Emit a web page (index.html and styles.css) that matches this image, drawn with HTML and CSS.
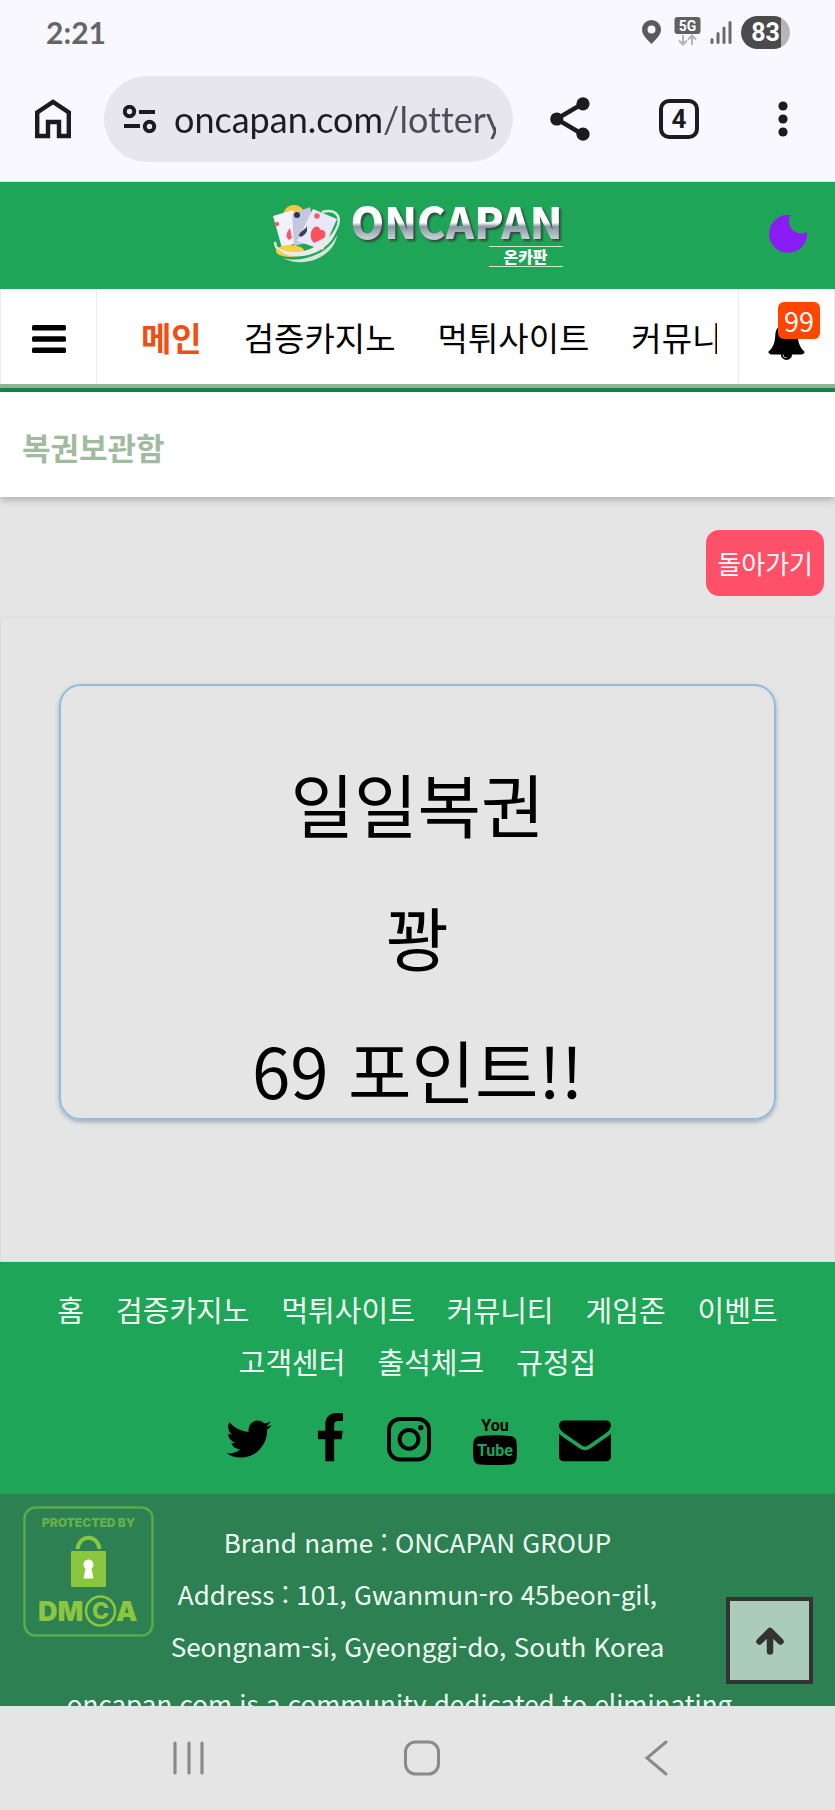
FILE: index.html
```html
<!DOCTYPE html>
<html lang="ko">
<head>
<meta charset="utf-8">
<meta name="viewport" content="width=device-width, initial-scale=1">
<title>복권보관함 - ONCAPAN</title>
<link rel="stylesheet" href="styles.css">
</head>
<body>
<div class="phone">
  <div class="chrome">
    <div class="status">
      <span class="clock">2:21</span>
      <div class="status-icons">
        <svg class="pin" viewBox="0 0 19 24" width="19" height="24"><path fill="#5b5b5d" fill-rule="evenodd" d="M9.500 0A9.500 9.500 0 0 0 0 9.500C0 15 5 19 9.500 24 14 19 19 15 19 9.500A9.500 9.500 0 0 0 9.500 0zm0 5.500a4 4 0 1 1 0 8 4 4 0 0 1 0-8z"/></svg>
        <svg class="net" viewBox="0 0 27 30" width="27" height="30"><rect width="26" height="17" x=".5" rx="3" fill="#616163"/><text x="13.500" y="13.500" text-anchor="middle" class="net-label">5G</text><path d="M9 18v9M5 23.500l4 4 4-4M18 28v-9M14 22.500l4-4 4 4" fill="none" stroke="#b3b3b8" stroke-width="2"/></svg>
        <svg class="signal" viewBox="0 0 22 23" width="22" height="23"><path d="M2 18.500v3M8 12.500v9M14 7v14.500M20 1.500v20" stroke="#6a6a6c" stroke-width="3" stroke-linecap="round"/></svg>
        <span class="battery">83</span>
      </div>
    </div>
    <div class="toolbar">
      <button class="icon-btn" type="button" aria-label="Home">
        <svg viewBox="0 0 36 40" width="36" height="40"><path d="M2.200 37V13.500L18 3l15.800 10.500V37H24V23H13v14z" fill="none" stroke="#1b1b21" stroke-width="4.400"/></svg>
      </button>
      <div class="omnibox">
        <svg viewBox="0 0 34 28" width="34" height="28" fill="none" stroke="#1b1b21" stroke-width="4"><circle cx="6.500" cy="6.500" r="4.700"/><circle cx="26.500" cy="21.500" r="4.700"/><path d="M16 7h16M1 21h16"/></svg>
        <input class="url" type="text" aria-label="Address" value="oncapan.com/lottery">
      </div>
      <div class="actions">
        <button class="icon-btn" type="button" aria-label="Share">
          <svg viewBox="0 0 40 44" width="40" height="44"><path d="M33 6.500L6.500 22 33 37.500" fill="none" stroke="#1b1b21" stroke-width="4.400"/><g fill="#1b1b21"><circle cx="33" cy="6.800" r="6.600"/><circle cx="6.800" cy="22" r="6.600"/><circle cx="33" cy="37.200" r="6.600"/></g></svg>
        </button>
        <button class="icon-btn tabs" type="button" aria-label="Tabs">4</button>
        <button class="icon-btn more" type="button" aria-label="Menu">
          <svg viewBox="0 0 10 36" width="10" height="36" fill="#1b1b21"><circle cx="5" cy="5" r="4.600"/><circle cx="5" cy="18" r="4.600"/><circle cx="5" cy="31" r="4.600"/></svg>
        </button>
      </div>
    </div>
  </div>

  <div class="site">
    <header class="masthead">
      <a class="logo" href="#" aria-label="ONCAPAN 온카판">
        <svg class="emblem" viewBox="0 0 68 62" width="68" height="62">
          <path d="M50 8c12-3 19 2 16 13C62 34 43 48 24 50 12 51 3 47 3 38" fill="none" stroke="#d7eadc" stroke-width="2.500"/>
          <circle cx="22" cy="12" r="11" fill="#f6c945"/>
          <path d="M1 12l20-6 9 31-20 7z" fill="#f3f2fb"/>
          <path d="M20 10l18-7 8 33-24 6z" fill="#c3c8dd"/>
          <path d="M41 5l24 10-14 31-26-9z" fill="#e7e8f8"/>
          <circle cx="25" cy="11" r="3" fill="#2d3358"/>
          <path d="M35 22c-1 4-8 5-8 10 2 2 6-1 8-5z" fill="#3a3f60"/>
          <path d="M18 24c-4 5-5 9-1 12l3-2z" fill="#f35b68"/>
          <circle cx="5" cy="20" r="2.200" fill="#f35b68"/><circle cx="45" cy="12" r="2.800" fill="#f35b68"/>
          <path d="M40 26c3-5 8-4 8 0 5-1 7 4 4 8l-10 5c-4-4-4-9-2-13z" fill="#f8525e"/>
          <ellipse cx="18" cy="47" rx="14" ry="6" fill="#f9cf45"/>
          <path d="M3 36c0 19 48 16 62-12-4 24-43 38-59 21" fill="#e7eee4"/>
          <path d="M10 54c22 6 48-6 55-23-2 19-29 35-55 23z" fill="#d5e6d6"/>
        </svg>
        <span class="wordmark">
          <span class="word">ONCAPAN</span>
          <span class="sub">온카판</span>
        </span>
      </a>
      <button class="theme" type="button" aria-label="Dark mode">
        <svg viewBox="0 0 38 38" width="38" height="38"><path fill="#8a1cf6" d="M21.500 0A19 19 0 1 0 38 17 12.300 12.300 0 0 1 21.500 0z"/></svg>
      </button>
    </header>

    <nav class="mainnav">
      <button class="cell burger" type="button" aria-label="전체메뉴">
        <svg viewBox="0 0 34 28" width="34" height="28"><rect width="34" height="5.600" rx="1.500"/><rect y="11.200" width="34" height="5.600" rx="1.500"/><rect y="22.400" width="34" height="5.600" rx="1.500"/></svg>
      </button>
      <div class="menu">
        <a class="active" href="#">메인</a>
        <a href="#">검증카지노</a>
        <a href="#">먹튀사이트</a>
        <a href="#">커뮤니티</a>
      </div>
      <button class="cell bell" type="button" aria-label="알림">
        <svg viewBox="0 0 1792 1792" width="39" height="39"><path d="M912 1696q0-16-16-16-59 0-101.500-42.500t-42.500-101.500q0-16-16-16t-16 16q0 73 51.500 124.500t124.500 51.500q16 0 16-16zm816-288q0 52-38 90t-90 38h-448q0 106-75 181t-181 75-181-75-75-181h-448q-52 0-90-38t-38-90q50-42 91-88t85-119.500 74.500-158.500 50-206 19.500-260q0-152 117-282.500t307-158.500q-8-19-8-39 0-40 28-68t68-28 68 28 28 68q0 20-8 39 190 28 307 158.500t117 282.500q0 139 19.500 260t50 206 74.500 158.500 85 119.500 91 88z"/></svg>
        <span class="count">99</span>
      </button>
    </nav>

    <h1 class="page-title">복권보관함</h1>

    <main class="content">
      <div class="back-row"><a class="back" href="#">돌아가기</a></div>
      <section class="panel">
        <div class="ticket">
          <p>일일복권</p>
          <p>꽝</p>
          <p>69 포인트!!</p>
        </div>
      </section>
    </main>

    <footer>
      <div class="foot-top">
        <nav class="foot-links">
          <a href="#">홈</a><a href="#">검증카지노</a><a href="#">먹튀사이트</a><a href="#">커뮤니티</a><a href="#">게임존</a><a href="#">이벤트</a><a href="#">고객센터</a><a href="#">출석체크</a><a href="#">규정집</a>
        </nav>
        <div class="social">
          <a href="#" aria-label="Twitter"><svg viewBox="64 0 1664 1792" width="48" height="52"><path d="M1684 408q-67 98-162 167 1 14 1 42 0 130-38 259.500t-115.500 248.500-184.500 210.500-258 146-323 54.500q-271 0-496-145 35 4 78 4 225 0 401-138-105-2-188-64.500t-114-159.500q33 5 61 5 43 0 85-11-112-23-185.500-111.500t-73.500-205.500v-4q68 38 146 41-66-44-105-115t-39-154q0-88 44-163 121 149 294.500 238.500t371.500 99.500q-8-38-8-74 0-134 94.500-228.500t228.500-94.500q140 0 236 102 109-21 205-78-37 115-142 178 93-10 186-50z"/></svg></a>
          <a href="#" aria-label="Facebook"><svg viewBox="384 0 1024 1792" width="30" height="52"><path d="M1343 12v264h-157q-86 0-116 36t-30 108v189h293l-39 296h-254v759h-306v-759h-255v-296h255v-218q0-186 104-288.500t277-102.500q147 0 228 12z"/></svg></a>
          <a href="#" aria-label="Instagram"><svg viewBox="0 0 44 52" width="44" height="52"><rect x="2" y="6" width="40" height="40.500" rx="11" fill="none" stroke="#000" stroke-width="4"/><circle cx="22" cy="26.300" r="9.400" fill="none" stroke="#000" stroke-width="4"/><circle cx="33.800" cy="14.600" r="2.700"/></svg></a>
          <a href="#" aria-label="YouTube"><svg viewBox="0 0 44 52" width="44" height="52"><text x="22" y="18" text-anchor="middle" class="yt">You</text><path d="M7 23q15-1.500 30 0 6 .5 6.500 6 1 8 0 17-.8 5-6 5.500-15 1.200-31 0-5-.5-6-5.500-1-9 0-17 .8-5.500 6.500-6z"/><text x="22" y="43" text-anchor="middle" class="yt cut">Tube</text></svg></a>
          <a href="#" aria-label="Email"><svg viewBox="0 0 1792 1792" width="52" height="52"><path d="M1792 710v794q0 66-47 113t-113 47h-1472q-66 0-113-47t-47-113v-794q44 49 101 87 362 246 497 345 57 42 92.500 65.500t94.500 48 110 24.500h2q51 0 110-24.500t94.500-48 92.500-65.500q170-123 498-345 57-39 100-87zm0-294q0 79-49 151t-122 123q-376 261-468 325-10 7-42.500 31t-54 38.800-52 33.200-57.500 27.800-50 9.200h-2q-23 0-50-9.200t-57.500-27.800-52-33.200-54-38.800-42.500-31q-91-64-262-182.500t-205-142.500q-62-42-117-115.500t-55-136.500q0-78 41.500-130t118.500-52h1472q65 0 112.500 47t47.500 113z"/></svg></a>
        </div>
      </div>
      <div class="foot-info">
        <svg class="dmca" viewBox="0 0 131 131" width="131" height="131">
          <rect x="1.500" y="1.500" width="128" height="128" rx="11" fill="none" stroke="#5da94a" stroke-width="2.500"/>
          <text x="65.500" y="21" text-anchor="middle" class="dmca-top">PROTECTED BY</text>
          <path d="M54.500 43c2-15 20-15 22 0" fill="none" stroke="#8bc63f" stroke-width="4"/>
          <rect x="48" y="45" width="35" height="36" rx="1" fill="#8bc63f"/>
          <path d="M65.500 53.500a5 5 0 0 1 3 9l2 10h-10l2-10a5 5 0 0 1 3-9z" fill="#fff"/>
          <text x="15" y="115" class="dmca-big">DM</text>
          <circle cx="77.500" cy="105" r="14.500" fill="none" stroke="#8bc63f" stroke-width="2.500"/>
          <text x="77.500" y="113" text-anchor="middle" class="dmca-c">C</text>
          <text x="93" y="115" class="dmca-big">A</text>
        </svg>
        <address>Brand name : ONCAPAN GROUP<br>Address : 101, Gwanmun-ro 45beon-gil,<br>Seongnam-si, Gyeonggi-do, South Korea</address>
        <p class="about">oncapan.com is a community dedicated to eliminating</p>
      </div>
    </footer>
    <button class="totop" type="button" aria-label="맨 위로">
      <svg viewBox="0 0 28 28" width="28" height="28"><path d="M14 24.500V5M3.500 14.500L14 4l10.500 10.500" fill="none" stroke="#333" stroke-width="6.500" stroke-linecap="round" stroke-linejoin="round"/></svg>
    </button>
  </div>

  <div class="sysnav">
    <button type="button" aria-label="Recents"><svg viewBox="0 0 40 34" width="40" height="34"><path d="M6 2v30M20 2v30M33 2v30" stroke="#8a8a8a" stroke-width="3.200" stroke-linecap="round"/></svg></button>
    <button type="button" aria-label="Home"><svg viewBox="0 0 40 36" width="40" height="36"><rect x="3.500" y="2" width="33" height="32" rx="10" fill="none" stroke="#8a8a8a" stroke-width="3"/></svg></button>
    <button type="button" aria-label="Back"><svg viewBox="0 0 40 36" width="40" height="36"><path d="M31 2L12 18l19 16" fill="none" stroke="#8a8a8a" stroke-width="3" stroke-linecap="round"/></svg></button>
  </div>
</div>
</body>
</html>
```
FILE: styles.css
```css
* { box-sizing: border-box; }
body {
  margin: 0;
  font-family: "Noto Sans CJK KR", sans-serif;
  color: #000;
}
button { font: inherit; color: inherit; background: none; border: 0; padding: 0; cursor: pointer; }
a { color: inherit; text-decoration: none; }
svg { display: block; flex: none; }
h1, p { margin: 0; }

.phone { display: flex; flex-direction: column; height: 100vh; overflow: hidden; background: #f9f8ff; }

/* Browser chrome */
.chrome { flex: none; padding-bottom: 19px; border-bottom: 1px solid #dfe3e6; }
.status { display: flex; justify-content: space-between; align-items: center; height: 64px; padding: 0 45px 0 46px; }
.clock { font: 700 30px/36px Lato, sans-serif; color: #666668; }
.status-icons { display: flex; align-items: center; gap: 9px; }
.pin { margin-right: 4px; }
.net-label { font: 700 14px Roboto, sans-serif; fill: #fff; }
.battery {
  width: 49px; height: 33px; border-radius: 17px; text-align: center;
  background: linear-gradient(90deg, #4b4b4d 40px, #b6b6b9 40px);
  font: 700 25px/33px Roboto, sans-serif; color: #fff;
}
.toolbar { display: flex; align-items: center; margin-top: 12px; padding: 0 38px 0 35px; }
.icon-btn { display: flex; align-items: center; justify-content: center; flex: none; }
.omnibox {
  display: flex; align-items: center; flex: 1; min-width: 0; height: 86px;
  margin: 0 37px 0 33px; padding: 0 17px 0 19px; border-radius: 43px; background: #e7e5ee;
}
.url {
  flex: 1; min-width: 0; margin-left: 17px; padding: 0; border: 0; outline: 0;
  font: 400 36px/48px Lato, sans-serif; font-variant-ligatures: none;
  color: transparent;
  background: linear-gradient(90deg, #1c1c22 210px, #4c4c57 210px);
  -webkit-background-clip: text; background-clip: text;
}
.actions { display: flex; align-items: center; gap: 69px; }
.tabs { width: 40px; height: 40px; border: 4px solid #1b1b21; border-radius: 10px; font: 700 26px/32px Roboto, sans-serif; color: #1b1b21; }
.more { width: 29px; }

/* Site */
.site { position: relative; flex: 1; min-height: 0; overflow: hidden; background: #e5e5e5; }
.masthead { position: relative; display: flex; justify-content: center; align-items: center; height: 107px; background: #1fa558; }
.logo { display: flex; align-items: flex-start; gap: 10px; }
.wordmark { display: flex; flex-direction: column; align-items: flex-end; }
.word {
  padding-bottom: 9px;
  font-size: 43px; line-height: 33px; font-weight: 900;
  color: transparent;
  background: linear-gradient(#fff 44%, #8b97a3 54%, #c3cad0 80%);
  -webkit-background-clip: text; background-clip: text;
  filter: drop-shadow(2px 2px 1px #2c4a3c);
}
.sub { width: 74px; border: solid #cfe9d8; border-width: 1px 0; font-size: 16px; line-height: 19px; font-weight: 900; color: #fff; text-align: center; }
.theme { position: absolute; right: 28px; top: 33px; }

.mainnav { position: relative; display: flex; height: 103px; border-bottom: 4px solid #178645; background: #fff; box-shadow: inset 0 -4px 0 #93b49b; }
.cell { position: relative; display: flex; align-items: center; justify-content: center; flex: none; width: 97px; margin-bottom: 4px; padding-top: 4px; border: solid #ebebeb; border-width: 0 1px; }
.menu { display: flex; align-items: center; gap: 42px; flex: 1; min-width: 0; overflow: hidden; margin: 0 21px 0 44px; padding-bottom: 4px; font-size: 33px; line-height: 48px; white-space: nowrap; }
.menu .active { font-weight: 700; color: #f04e12; }
.bell { padding-top: 8px; }
.count { position: absolute; top: 13px; right: 14px; min-width: 42px; padding: 0 6px; border-radius: 6px; background: #ff4500; color: #fff; font-size: 27px; line-height: 37px; text-align: center; }

.page-title { position: relative; padding: 32px 22px 27px; background: #fff; box-shadow: 0 2px 8px rgba(70, 70, 40, .4); font-size: 31px; line-height: 46px; font-weight: 700; color: #a1bba1; }

.back-row { display: flex; justify-content: flex-end; padding: 33px 11px 21px; }
.back { padding: 0 11px; border-radius: 13px; background: #ff5069; color: #fff; font-size: 26px; line-height: 66px; }
.panel { padding: 66px 58px 141px; border: 1px solid #dcdcdc; }
.ticket {
  display: grid; gap: 41px; padding: 71px 0 3px; text-align: center;
  border: 2px solid #90bddb; border-radius: 22px; box-shadow: 0 2px 4px rgba(60, 80, 120, .4);
  font-size: 69px; line-height: 92px;
}

.foot-top { padding: 21px 40px 29px; background: #1fa558; }
.foot-links { display: flex; flex-wrap: wrap; justify-content: center; column-gap: 32px; font-size: 29px; line-height: 52px; color: #f0fff5; }
.social { display: flex; justify-content: center; gap: 42px; margin-top: 26px; }
.yt { font: 700 16px Roboto, sans-serif; }
.cut { fill: #1fa558; }
.foot-info { position: relative; padding: 22px 40px; background: #2d8051; font-size: 26px; line-height: 52px; color: #effdf4; text-align: center; }
.foot-info address { font-style: normal; }
.about { margin: 5px 36px 0 0; white-space: nowrap; }
.dmca { position: absolute; left: 23px; top: 12px; }
.dmca-top { font: 900 12px Inter, sans-serif; fill: #66b047; }
.dmca-big { font: 900 27px Inter, sans-serif; fill: #8bc63f; }
.dmca-c { font: 800 23px Inter, sans-serif; fill: #8bc63f; }
.totop { position: absolute; right: 22px; bottom: 22px; display: flex; align-items: center; justify-content: center; width: 87px; height: 87px; border: 4px solid #333; background: rgba(255, 255, 255, .6); }

/* System navigation */
.sysnav { display: flex; flex: none; justify-content: center; align-items: center; gap: 193px; height: 104px; background: #e5e5e5; padding-left: 8px; }
```
